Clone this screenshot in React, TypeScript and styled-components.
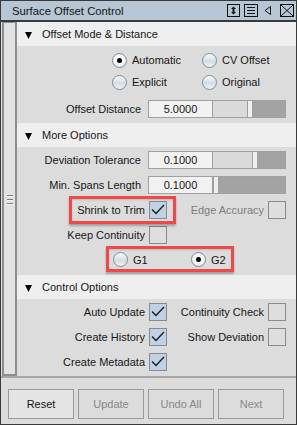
import React from "react";
import styled, { createGlobalStyle, css } from "styled-components";

const GlobalStyle = createGlobalStyle`
  html, body {
    margin: 0;
    padding: 0;
    background: #ffffff;
  }
  body {
    font-family: "Liberation Sans", Arial, sans-serif;
    font-size: 11px;
    color: #161616;
  }
`;

const Window = styled.div`
  width: 297px;
  height: 425px;
  box-sizing: border-box;
  border: 1px solid #3a3a3a;
  display: flex;
  flex-direction: column;
  background: #dcdcdc;
  overflow: hidden;
`;

const TitleBar = styled.div`
  height: 19px;
  flex: none;
  display: flex;
  align-items: center;
  padding: 0 2px 0 11px;
  background: #b6c6d5;
  border-bottom: 2px solid #3a3a3a;
`;

const TitleText = styled.span`
  flex: 1;
  color: #141414;
  font-size: 11.3px;
`;

const TitleIcons = styled.div`
  display: flex;
  align-items: center;
  gap: 4px;
`;

const Body = styled.div`
  flex: 1;
  display: flex;
  min-height: 0;
`;

const Strip = styled.div`
  width: 11px;
  margin-left: 1px;
  border: 2px solid #8e8e8e;
  border-top-width: 1px;
  background: #e2e2e2;
  display: flex;
  align-items: center;
  justify-content: center;
`;

const Grip = styled.div`
  display: flex;
  flex-direction: column;
  gap: 2px;
  margin-top: 3px;

  span {
    display: block;
    width: 6px;
    height: 1px;
    background: #7a7a7a;
    border-bottom: 1px solid #f4f4f4;
  }
`;

const Content = styled.div`
  flex: 1;
  display: flex;
  flex-direction: column;
`;

const SectionHeader = styled.div`
  height: 24px;
  flex: none;
  display: flex;
  align-items: center;
  gap: 10px;
  padding-left: 8px;
  background: #efefef;
`;

const SectionBody = styled.div<{ $pad: string }>`
  display: flex;
  flex-direction: column;
  padding: ${({ $pad }) => $pad};
`;

const Row = styled.div<{ $h?: number; $indent?: number; $top?: number }>`
  height: ${({ $h }) => $h ?? 25}px;
  flex: none;
  display: flex;
  align-items: center;
  padding-left: ${({ $indent }) => $indent ?? 0}px;
  margin-top: ${({ $top }) => $top ?? 0}px;
`;

const FieldLabel = styled.span`
  width: 124px;
  margin-right: 7px;
  text-align: right;
  white-space: nowrap;
`;

const Field = styled.div`
  width: 65px;
  height: 18px;
  box-sizing: border-box;
  border: 1px solid #a0a0a0;
  background: #f2f2f2;
  display: flex;
  align-items: center;
  justify-content: center;
`;

const Track = styled.div`
  width: 73px;
  height: 18px;
  box-sizing: border-box;
  display: flex;
  border: 1px solid #a0a0a0;
  border-left: none;
`;

const TrackFill = styled.div<{ $w: number }>`
  width: ${({ $w }) => $w}px;
  background: #dadada;
`;

const TrackHandle = styled.div`
  width: 4px;
  background: #f0f0f0;
  border-left: 1px solid #a0a0a0;
  border-right: 1px solid #a0a0a0;
`;

const TrackRest = styled.div`
  flex: 1;
  background: #a3a3a3;
`;

const CheckCell = styled.div<{ $w: number }>`
  width: ${({ $w }) => $w}px;
  display: flex;
  align-items: center;
  justify-content: flex-end;
`;

const CheckLabel = styled.span<{ $dim?: boolean }>`
  margin-right: 4px;
  white-space: nowrap;
  color: ${({ $dim }) => ($dim ? "#7c7c7c" : "#161616")};
`;

const Box = styled.span<{ $on?: boolean }>`
  width: 18px;
  height: 18px;
  box-sizing: border-box;
  flex: none;
  border: 1px solid #8a8a8a;
  background: ${({ $on }) => ($on ? "#bed1e5" : "#dedede")};
  display: flex;
  align-items: center;
  justify-content: center;
`;

const RadioItem = styled.label<{ $w?: number }>`
  display: flex;
  align-items: center;
  gap: 5px;
  width: ${({ $w }) => ($w ? `${$w}px` : "auto")};
`;

const RadioDot = styled.span<{ $on?: boolean }>`
  position: relative;
  width: 15px;
  height: 15px;
  box-sizing: border-box;
  flex: none;
  border-radius: 50%;
  border: 1px solid #7f8d98;
  background: linear-gradient(#fbfcfd 0%, #d3dde4 55%, #eef2f5 100%);

  ${({ $on }) =>
    $on &&
    css`
      background: radial-gradient(circle at 50% 45%, #ffffff 0%, #f2f5f7 55%, #cfd9e0 100%);
      &::after {
        content: "";
        position: absolute;
        left: 4px;
        top: 4px;
        width: 5px;
        height: 5px;
        border-radius: 50%;
        background: #000000;
      }
    `}
`;

const Highlight = styled.div<{ $inset: string }>`
  position: relative;
  display: flex;
  align-items: center;

  &::after {
    content: "";
    position: absolute;
    inset: ${({ $inset }) => $inset};
    border: 3px solid #f04848;
    box-shadow: 0 2px 2px rgba(0, 0, 0, 0.28), inset 0 1px 2px rgba(0, 0, 0, 0.15);
    pointer-events: none;
  }
`;

const Footer = styled.div`
  height: 48px;
  flex: none;
  box-sizing: border-box;
  border-top: 2px solid #a6a6a6;
  display: flex;
  gap: 4px;
  padding: 11px 0 0 7px;
`;

const Button = styled.button<{ $primary?: boolean }>`
  width: 66px;
  height: 30px;
  box-sizing: border-box;
  border: 1px solid #9a9a9a;
  background: ${({ $primary }) => ($primary ? "#e4e4e4" : "#dcdcdc")};
  color: ${({ $primary }) => ($primary ? "#141414" : "#888888")};
  font-family: inherit;
  font-size: 11px;
  padding: 0;
`;

const Check = () => (
  <svg width="16" height="16" viewBox="0 0 16 16">
    <polyline points="2,7.5 6,11.5 14,3" fill="none" stroke="#1a1a1a" strokeWidth="1.3" />
  </svg>
);

const Triangle = () => (
  <svg width="7" height="7" viewBox="0 0 7 7" style={{ marginTop: 2 }}>
    <polygon points="0,0 7,0 3.5,7" fill="#000" />
  </svg>
);

const Slider = ({ value, min, max }: { value: number; min: number; max: number }) => {
  const fill = Math.round(((value - min) / (max - min)) * 67);
  return (
    <Track>
      <TrackFill $w={fill} />
      <TrackHandle />
      <TrackRest />
    </Track>
  );
};

const FieldRow = ({
  label,
  value,
  pos,
  top,
}: {
  label: string;
  value: string;
  pos: number;
  top?: number;
}) => (
  <Row $top={top}>
    <FieldLabel>{label}</FieldLabel>
    <Field>{value}</Field>
    <Slider value={pos} min={0} max={1} />
  </Row>
);

const CheckItem = ({ label, on, dim }: { label: string; on?: boolean; dim?: boolean }) => (
  <>
    <CheckLabel $dim={dim}>{label}</CheckLabel>
    <Box $on={on}>{on && <Check />}</Box>
  </>
);

const Radio = ({ label, on, w }: { label: string; on?: boolean; w?: number }) => (
  <RadioItem $w={w}>
    <RadioDot $on={on} />
    <span>{label}</span>
  </RadioItem>
);

const Section = ({ title }: { title: string }) => (
  <SectionHeader>
    <Triangle />
    <span>{title}</span>
  </SectionHeader>
);

export default function App() {
  return (
    <>
      <GlobalStyle />
      <Window>
        <TitleBar>
          <TitleText>Surface Offset Control</TitleText>
          <TitleIcons>
            <svg width="13" height="13" viewBox="0 0 13 13">
              <rect x="0.5" y="0.5" width="12" height="12" fill="none" stroke="#111" />
              <path d="M6.5 2.5 L4 5 H9 Z M6.5 10.5 L4 8 H9 Z" fill="#111" />
              <rect x="5.5" y="4" width="2" height="5" fill="#111" />
            </svg>
            <svg width="14" height="13" viewBox="0 0 14 13">
              <rect x="0.5" y="0.5" width="13" height="12" fill="none" stroke="#111" />
              <path d="M3 3.5 H11 M3 6.5 H11 M3 9.5 H11" stroke="#111" />
            </svg>
            <svg width="13" height="13" viewBox="0 0 13 13">
              <polygon points="8.5,2.5 8.5,10.5 3,6.5" fill="none" stroke="#111" />
            </svg>
            <svg width="14" height="13" viewBox="0 0 14 13" style={{ marginLeft: 1 }}>
              <rect x="0.5" y="0.5" width="13" height="12" fill="none" stroke="#111" />
              <path d="M1 1 L13 12 M13 1 L1 12" stroke="#111" />
            </svg>
          </TitleIcons>
        </TitleBar>

        <Body>
          <Strip>
            <Grip>
              <span />
              <span />
              <span />
            </Grip>
          </Strip>
          <Content>
            <Section title="Offset Mode & Distance" />
            <SectionBody $pad="3px 0 2px">
              <Row $h={22} $indent={95}>
                <Radio label="Automatic" on w={90} />
                <Radio label="CV Offset" />
              </Row>
              <Row $h={22} $indent={95}>
                <Radio label="Explicit" w={90} />
                <Radio label="Original" />
              </Row>
              <FieldRow label="Offset Distance" value="5.0000" pos={34 / 67} top={3} />
            </SectionBody>

            <Section title="More Options" />
            <SectionBody $pad="0 0 3px">
              <FieldRow label="Deviation Tolerance" value="0.1000" pos={39 / 67} />
              <FieldRow label="Min. Spans Length" value="0.1000" pos={0} />
              <Row>
                <CheckCell $w={150}>
                  <Highlight $inset="-5px -9px -5px -8px">
                    <CheckItem label="Shrink to Trim" on />
                  </Highlight>
                </CheckCell>
                <CheckCell $w={119}>
                  <CheckItem label="Edge Accuracy" dim />
                </CheckCell>
              </Row>
              <Row>
                <CheckCell $w={150}>
                  <CheckItem label="Keep Continuity" />
                </CheckCell>
              </Row>
              <Row $indent={96}>
                <Highlight $inset="-6px -8px -5px -7px">
                  <Radio label="G1" w={78} />
                  <Radio label="G2" on />
                </Highlight>
              </Row>
            </SectionBody>

            <Section title="Control Options" />
            <SectionBody $pad="0">
              <Row>
                <CheckCell $w={150}>
                  <CheckItem label="Auto Update" on />
                </CheckCell>
                <CheckCell $w={119}>
                  <CheckItem label="Continuity Check" />
                </CheckCell>
              </Row>
              <Row>
                <CheckCell $w={150}>
                  <CheckItem label="Create History" on />
                </CheckCell>
                <CheckCell $w={119}>
                  <CheckItem label="Show Deviation" />
                </CheckCell>
              </Row>
              <Row>
                <CheckCell $w={150}>
                  <CheckItem label="Create Metadata" on />
                </CheckCell>
              </Row>
            </SectionBody>
          </Content>
        </Body>

        <Footer>
          <Button $primary>Reset</Button>
          <Button>Update</Button>
          <Button>Undo All</Button>
          <Button>Next</Button>
        </Footer>
      </Window>
    </>
  );
}
